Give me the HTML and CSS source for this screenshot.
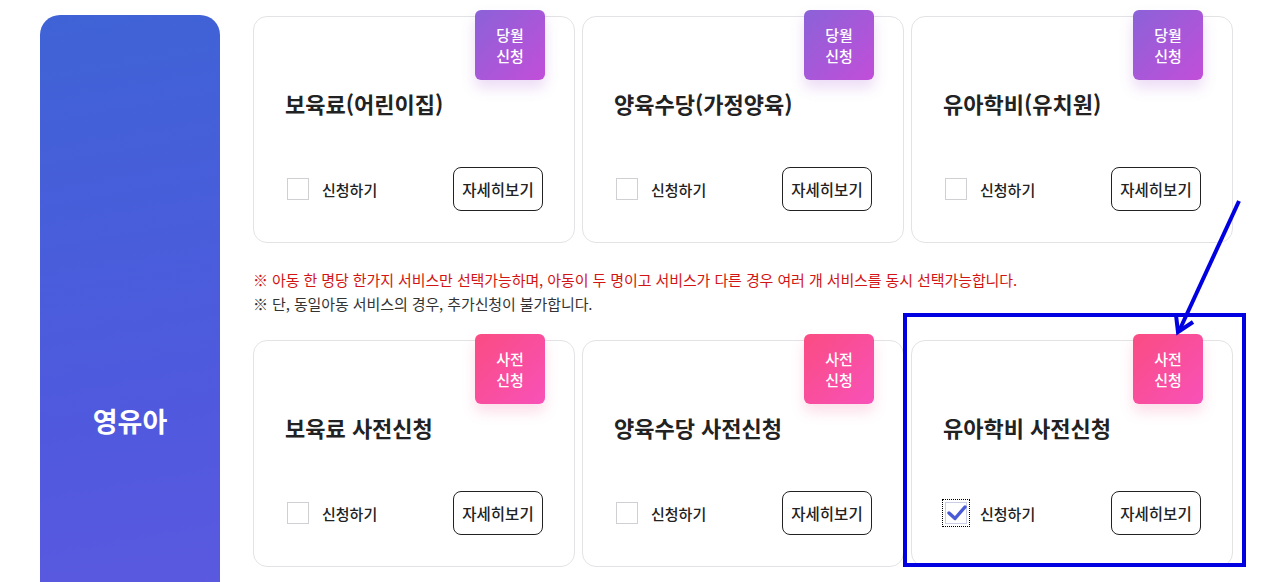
FILE: index.html
```html
<!DOCTYPE html>
<html lang="ko">
<head>
	<meta charset="utf-8" />
	<meta name="viewport" content="width=device-width, initial-scale=1.0" />
	<title>서비스 신청</title>
	<link rel="stylesheet" href="styles.css">
</head>

<body>
	<div class="apply-wrap">
		<div class="age-panel">
			<span>영유아</span>
		</div>

		<div class="service-area">
			<div class="card-row">
				<div class="card">
					<span class="badge badge-month">당월<br/>신청</span>
					<h3 class="card-title">보육료(어린이집)</h3>
					<div class="card-foot">
						<label class="apply-check"><span class="box"></span>신청하기</label>
						<button class="more-btn">자세히보기</button>
					</div>
				</div>
				<div class="card">
					<span class="badge badge-month">당월<br/>신청</span>
					<h3 class="card-title">양육수당(가정양육)</h3>
					<div class="card-foot">
						<label class="apply-check"><span class="box"></span>신청하기</label>
						<button class="more-btn">자세히보기</button>
					</div>
				</div>
				<div class="card">
					<span class="badge badge-month">당월<br/>신청</span>
					<h3 class="card-title">유아학비(유치원)</h3>
					<div class="card-foot">
						<label class="apply-check"><span class="box"></span>신청하기</label>
						<button class="more-btn">자세히보기</button>
					</div>
				</div>
			</div>

			<div class="notice">
				<p class="notice-red">※ 아동 한 명당 한가지 서비스만 선택가능하며, 아동이 두 명이고 서비스가 다른 경우 여러 개 서비스를 동시 선택가능합니다.</p>
				<p>※ 단, 동일아동 서비스의 경우, 추가신청이 불가합니다.</p>
			</div>

			<div class="card-row">
				<div class="card">
					<span class="badge badge-pre">사전<br/>신청</span>
					<h3 class="card-title">보육료 사전신청</h3>
					<div class="card-foot">
						<label class="apply-check"><span class="box"></span>신청하기</label>
						<button class="more-btn">자세히보기</button>
					</div>
				</div>
				<div class="card">
					<span class="badge badge-pre">사전<br/>신청</span>
					<h3 class="card-title">양육수당 사전신청</h3>
					<div class="card-foot">
						<label class="apply-check"><span class="box"></span>신청하기</label>
						<button class="more-btn">자세히보기</button>
					</div>
				</div>
				<div class="card">
					<span class="badge badge-pre">사전<br/>신청</span>
					<h3 class="card-title">유아학비 사전신청</h3>
					<div class="card-foot">
						<label class="apply-check checked">
							<span class="box">
								<svg viewBox="0 0 22 22" width="22" height="22"><polyline points="4,11 10,16.5 20,5" fill="none" stroke="#4b5bd8" stroke-width="3.4" stroke-linecap="round" stroke-linejoin="round"/></svg>
							</span>신청하기
						</label>
						<button class="more-btn">자세히보기</button>
					</div>
				</div>
			</div>
		</div>
	</div>

	<!-- annotation drawn over the page -->
	<svg class="annotation" width="1262" height="582" viewBox="0 0 1262 582">
		<rect x="905" y="315" width="339" height="250" fill="none" stroke="#0000e0" stroke-width="4"/>
		<line x1="1239" y1="201" x2="1180" y2="329" stroke="#0000e0" stroke-width="4"/>
		<polyline points="1176,315 1178,332 1193,322" fill="none" stroke="#0000e0" stroke-width="4" stroke-linejoin="miter"/>
	</svg>
</body></html>
```

FILE: styles.css
```css
body {
	margin: 0;
	background: #fff;
	font-family: "Noto Sans CJK KR", "Noto Sans", sans-serif;
	color: #222;
	overflow: hidden;
}
p, h3 {
	margin: 0;
}
.apply-wrap {
	display: flex;
	gap: 33px;
	padding: 15px 0 0 40px;
}
.age-panel {
	flex: none;
	width: 180px;
	height: 810px;
	border-radius: 20px 20px 0 0;
	background: linear-gradient(170deg, #3f63d6 0%, #5059de 50%, #6759e2 100%);
	display: flex;
	align-items: center;
	justify-content: center;
	color: #fff;
	font-size: 27px;
	font-weight: 700;
}
.service-area {
	width: 980px;
	padding-top: 1px;
}
.card-row {
	display: grid;
	grid-template-columns: repeat(3, 1fr);
	gap: 7px;
}
.card {
	position: relative;
	border: 1px solid #e3e3e6;
	border-radius: 14px;
	background: #fff;
	padding: 71px 31px 31px 31px;
}
.badge {
	position: absolute;
	top: -7px;
	right: 29px;
	width: 70px;
	height: 70px;
	border-radius: 6px;
	display: flex;
	align-items: center;
	justify-content: center;
	text-align: center;
	color: #fff;
	font-size: 15px;
	font-weight: 500;
	line-height: 21px;
}
.badge-month {
	background: linear-gradient(135deg, #8b62d8 0%, #c24ed9 100%);
	box-shadow: 0 8px 14px rgba(170, 90, 210, 0.22);
}
.badge-pre {
	background: linear-gradient(135deg, #fa4c82 0%, #f851b9 100%);
	box-shadow: 0 8px 14px rgba(240, 90, 150, 0.2);
}
.card-title {
	font-size: 22px;
	font-weight: 700;
	line-height: 30px;
	color: #222;
}
.card-foot {
	display: flex;
	align-items: center;
	justify-content: space-between;
	margin-top: 49px;
}
.apply-check {
	display: flex;
	align-items: center;
	gap: 13px;
	margin-left: 2px;
	font-size: 15px;
	font-weight: 500;
	color: #222;
}
.apply-check .box {
	width: 20px;
	height: 20px;
	border: 1px solid #cfcfd4;
	background: #fff;
	position: relative;
}
.apply-check.checked .box {
	outline: 1px dotted #000;
	outline-offset: 2px;
	border-color: #c9cde8;
}
.apply-check .box svg {
	position: absolute;
	left: -1px;
	top: -1px;
}
.more-btn {
	width: 90px;
	height: 44px;
	border: 1px solid #222;
	border-radius: 8px;
	background: #fff;
	font-family: inherit;
	font-size: 15.5px;
	font-weight: 500;
	color: #222;
	padding: 0;
}
.notice {
	padding: 25px 0 24px 0;
	font-size: 15px;
	line-height: 24px;
	color: #333;
	letter-spacing: -0.1px;
}
.notice-red {
	color: #d21414;
}
.annotation {
	position: absolute;
	left: 0;
	top: 0;
	pointer-events: none;
}
```
